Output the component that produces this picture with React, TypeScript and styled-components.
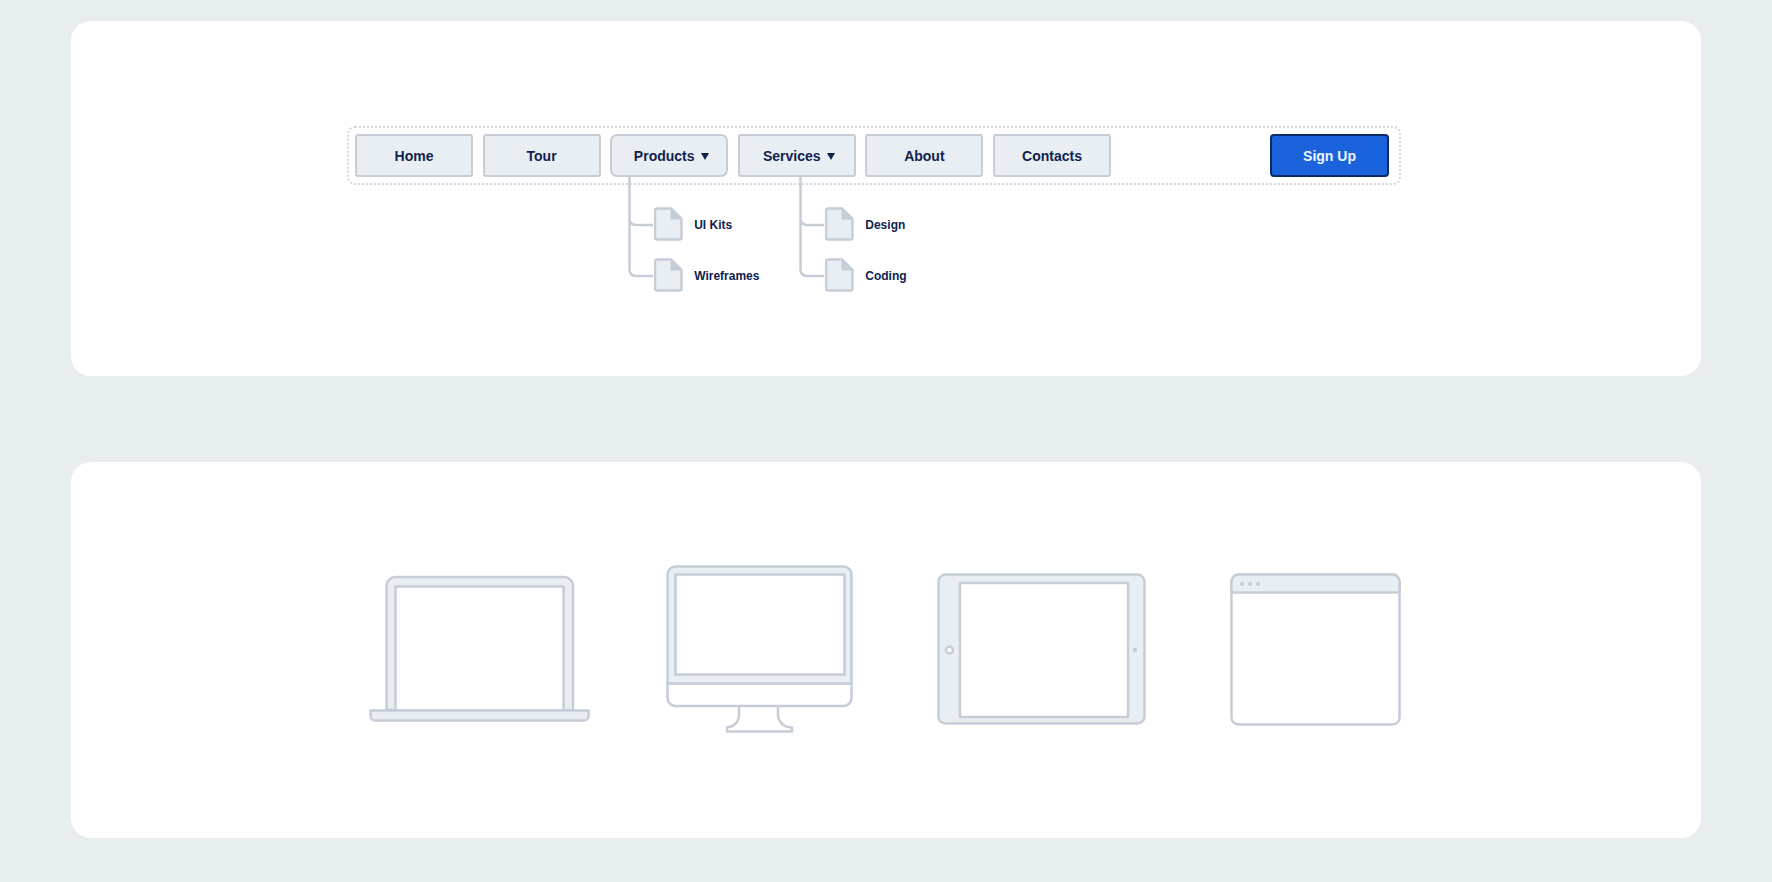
import React from "react";
import styled, { createGlobalStyle } from "styled-components";

const LINE = "#c6cdd7";
const FILL = "#e9eef2";
const INK = "#10234f";

const Global = createGlobalStyle`
  html, body { margin: 0; padding: 0; background: #e8edf0; }
  body { font-family: "Liberation Sans", Arial, sans-serif; }
`;

const Page = styled.div`
  width: 1772px;
  height: 882px;
  overflow: hidden;
  box-sizing: border-box;
  padding: 21px 71px 0;
  display: flex;
  flex-direction: column;
  gap: 86px;
`;

const Card = styled.section<{ $height: number }>`
  width: 1630px;
  height: ${(p) => p.$height}px;
  box-sizing: border-box;
  background: #fff;
  border-radius: 20px;
`;

const NavCard = styled(Card)`
  padding: 105px 0 0 276px;
`;

const DeviceCard = styled(Card)`
  display: flex;
  align-items: center;
  padding: 0 0 2px 298px;
`;

const Nav = styled.nav`
  width: 1054px;
  height: 59px;
  box-sizing: border-box;
  border: 2px dotted #d3d8df;
  border-radius: 8px;
  padding: 6px 10px 6px 6px;
  display: flex;
  gap: 9.6px;
`;

const NavItem = styled.div`
  position: relative;
`;

const NavButton = styled.button<{ $radius?: number; $caret?: boolean }>`
  width: 118px;
  height: 43px;
  box-sizing: border-box;
  padding: 1px 0 0 ${(p) => (p.$caret ? 4 : 0)}px;
  display: flex;
  align-items: center;
  justify-content: center;
  gap: 6px;
  border: 2px solid ${LINE};
  border-radius: ${(p) => p.$radius ?? 3}px;
  background: ${FILL};
  color: ${INK};
  font: bold 14px "Liberation Sans", Arial, sans-serif;
`;

const SignUp = styled(NavButton)`
  width: 119px;
  margin-left: auto;
  border-color: #0b2a66;
  border-radius: 4px;
  background: #1a63dc;
  color: #eef4ff;
`;

const Caret = styled.span`
  width: 0;
  height: 0;
  margin-top: 1px;
  border-left: 4px solid transparent;
  border-right: 4px solid transparent;
  border-top: 7px solid ${INK};
`;

const Dropdown = styled.div<{ $left: number }>`
  position: absolute;
  top: 100%;
  left: ${(p) => p.$left}px;
  display: flex;
  align-items: flex-start;
`;

const Connector = styled.svg`
  display: block;
  width: 26px;
  height: 102px;
  flex: none;
`;

const SubList = styled.ul`
  list-style: none;
  margin: 30px 0 0;
  padding: 0;
  display: flex;
  flex-direction: column;
  gap: 17px;
`;

const SubItem = styled.li`
  display: flex;
  align-items: center;
  gap: 11px;
  height: 34px;
  color: ${INK};
  font-size: 12px;
  font-weight: bold;
  white-space: nowrap;
`;

const SubLabel = styled.span`
  padding-top: 2px;
`;

const FileGlyph = styled.svg`
  display: block;
  width: 29px;
  height: 34px;
  flex: none;
`;

const DeviceIcon = styled.svg<{ $after: number }>`
  display: block;
  flex: none;
  margin-right: ${(p) => p.$after}px;
`;

const Stroke = { stroke: LINE, strokeWidth: 2.5, strokeLinejoin: "round" as const };

const FileIcon = () => (
  <FileGlyph viewBox="0 0 29 34">
    <path d="M3 1.5H17L27.5 12V30.5a2 2 0 0 1-2 2H3a2 2 0 0 1-2-2V3.5a2 2 0 0 1 2-2Z" fill={FILL} {...Stroke} />
    <path d="M16.5 1.5L27.5 12.5H16.5Z" fill={LINE} />
  </FileGlyph>
);

const Tree = () => (
  <Connector viewBox="0 0 26 102">
    <path
      d="M1.5 0V42a6 6 0 0 0 6 6H25M1.5 42V93a6 6 0 0 0 6 6H25"
      fill="none"
      stroke={LINE}
      strokeWidth="2.5"
    />
  </Connector>
);

const Laptop = () => (
  <DeviceIcon $after={76} width="221" height="149" viewBox="0 -2 221 149">
    <path d="M17.5 133V9a9 9 0 0 1 9-9H195a9 9 0 0 1 9 9V133Z" fill={FILL} {...Stroke} />
    <rect x="26.5" y="9.5" width="168" height="124" fill="#fff" {...Stroke} />
    <path d="M1.5 133.5H219.5V139a4.5 4.5 0 0 1-4.5 4.5H6a4.5 4.5 0 0 1-4.5-4.5Z" fill={FILL} {...Stroke} />
  </DeviceIcon>
);

const Desktop = () => (
  <DeviceIcon $after={84} width="187" height="170" viewBox="-1 -3 187 170">
    <path d="M72 139V148C72 155 67 160 60 160.5V164.5H125V160.5C117 160 111 155 111 148V139" fill="#fff" {...Stroke} />
    <path d="M0.5 116.5H184.5V131a8 8 0 0 1-8 8H8.5a8 8 0 0 1-8-8Z" fill="#fff" {...Stroke} />
    <path d="M0.5 116.5V7.5a8 8 0 0 1 8-8H176.5a8 8 0 0 1 8 8V116.5Z" fill={FILL} {...Stroke} />
    <rect x="8.5" y="7.5" width="169" height="100" fill="#fff" {...Stroke} />
  </DeviceIcon>
);

const Tablet = () => (
  <DeviceIcon $after={84} width="209" height="153" viewBox="-1 -2 209 153">
    <rect x="0.5" y="-0.5" width="206" height="149" rx="7" fill={FILL} {...Stroke} />
    <rect x="22" y="8" width="168" height="134" fill="#fff" {...Stroke} />
    <circle cx="11.5" cy="75" r="3.5" fill="#fff" stroke={LINE} strokeWidth="2.5" />
    <circle cx="197" cy="75" r="2.2" fill={LINE} />
  </DeviceIcon>
);

const BrowserWindow = () => (
  <DeviceIcon $after={0} width="171" height="153" viewBox="-1 -1 171 153">
    <rect x="0.5" y="0.5" width="168" height="150" rx="7" fill="#fff" {...Stroke} />
    <path d="M0.5 18.5V7.5a7 7 0 0 1 7-7H161.5a7 7 0 0 1 7 7V18.5Z" fill={FILL} {...Stroke} />
    <circle cx="11" cy="10" r="2" fill={LINE} />
    <circle cx="19" cy="10" r="2" fill={LINE} />
    <circle cx="27" cy="10" r="2" fill={LINE} />
  </DeviceIcon>
);

const Menu = ({ left, items }: { left: number; items: string[] }) => (
  <Dropdown $left={left}>
    <Tree />
    <SubList>
      {items.map((label) => (
        <SubItem key={label}>
          <FileIcon />
          <SubLabel>{label}</SubLabel>
        </SubItem>
      ))}
    </SubList>
  </Dropdown>
);

export default function App() {
  return (
    <Page>
      <Global />
      <NavCard $height={355}>
        <Nav>
          <NavButton>Home</NavButton>
          <NavButton>Tour</NavButton>
          <NavItem>
            <NavButton $radius={7} $caret>
              Products
              <Caret />
            </NavButton>
            <Menu left={18} items={["UI Kits", "Wireframes"]} />
          </NavItem>
          <NavItem>
            <NavButton $caret>
              Services
              <Caret />
            </NavButton>
            <Menu left={61.5} items={["Design", "Coding"]} />
          </NavItem>
          <NavButton>About</NavButton>
          <NavButton>Contacts</NavButton>
          <SignUp>Sign Up</SignUp>
        </Nav>
      </NavCard>
      <DeviceCard $height={376}>
        <Laptop />
        <Desktop />
        <Tablet />
        <BrowserWindow />
      </DeviceCard>
    </Page>
  );
}
